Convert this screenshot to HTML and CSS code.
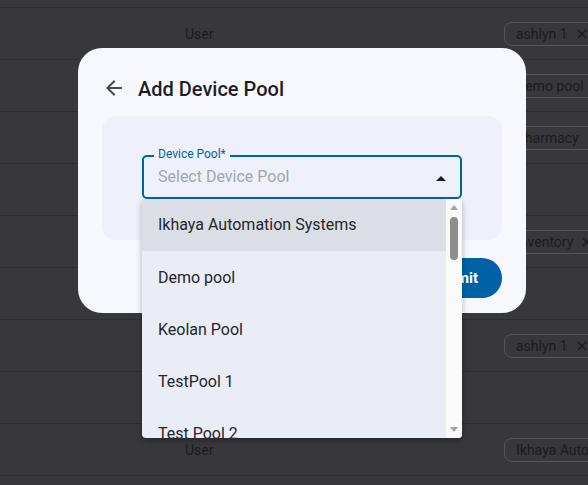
FILE: index.html
```html
<!doctype html>
<html lang="en">
  <head>
    <meta charset="utf-8">
    <title>Add Device Pool</title>
    <link rel="stylesheet" href="styles.css">
  </head>
  <body>
    <div class="table">
      <div class="row"></div>
      <div class="row"><span class="cell">User</span><span class="chip">ashlyn 1 <svg class="x" viewBox="0 0 10 10"><path d="M1 1l8 8M9 1l-8 8"/></svg></span></div>
      <div class="row"><span class="chip">Demo pool <svg class="x" viewBox="0 0 10 10"><path d="M1 1l8 8M9 1l-8 8"/></svg></span></div>
      <div class="row"><span class="chip">Pharmacy <svg class="x" viewBox="0 0 10 10"><path d="M1 1l8 8M9 1l-8 8"/></svg></span></div>
      <div class="row"></div>
      <div class="row"><span class="chip">Inventory <svg class="x" viewBox="0 0 10 10"><path d="M1 1l8 8M9 1l-8 8"/></svg></span></div>
      <div class="row"></div>
      <div class="row"><span class="chip">ashlyn 1 <svg class="x" viewBox="0 0 10 10"><path d="M1 1l8 8M9 1l-8 8"/></svg></span></div>
      <div class="row"></div>
      <div class="row"><span class="cell">User</span><span class="chip">Ikhaya Automation Systems</span></div>
    </div>

    <div class="modal">
      <div class="modal-head">
        <span class="back">
          <svg width="24" height="24" viewBox="0 0 24 24">
            <path d="M20 11H7.83l5.59-5.59L12 4l-8 8 8 8 1.41-1.41L7.83 13H20v-2z" fill="#454850"/>
          </svg>
        </span>
        <h1>Add Device Pool</h1>
      </div>

      <div class="panel">
        <div class="field">
          <div class="select">
            <span class="label">Device Pool*</span>
            <span class="placeholder">Select Device Pool</span>
            <span class="caret"></span>
          </div>
          <div class="dropdown">
            <ul class="options">
              <li class="active">Ikhaya Automation Systems</li>
              <li>Demo pool</li>
              <li>Keolan Pool</li>
              <li>TestPool 1</li>
              <li>Test Pool 2</li>
            </ul>
            <div class="scrollbar">
              <span class="arrow up"></span>
              <span class="thumb"></span>
              <span class="arrow down"></span>
            </div>
          </div>
        </div>
      </div>

      <div class="actions">
        <button class="submit">Submit</button>
      </div>
    </div>
  </body>
</html>
```

FILE: styles.css
```css
html, body {
  margin: 0;
  height: 485px;
  overflow: hidden;
}
body {
  background: #38373c;
  font-family: Roboto, "Liberation Sans", sans-serif;
  position: relative;
}

/* page behind the overlay */
.table {
  margin-top: -44px;
}
.row {
  height: 52px;
  box-sizing: border-box;
  border-bottom: 1px solid #2d2c31;
  display: grid;
  grid-template-columns: 185px 319px 84px;
  align-items: center;
  font-size: 14px;
  color: #1c1c1f;
  white-space: nowrap;
  overflow: hidden;
}
.cell {
  grid-column: 2;
}
.chip {
  grid-column: 3;
  display: inline-flex;
  align-items: center;
  height: 24px;
  box-sizing: border-box;
  border: 1px solid #56555b;
  border-radius: 8px;
  padding: 0 11px;
  width: max-content;
}
.x {
  width: 10px;
  height: 10px;
  margin-left: 9px;
  stroke: #1c1c1f;
  stroke-width: 1.4;
  fill: none;
}

/* dialog */
.modal {
  position: absolute;
  left: 78px;
  top: 48px;
  width: 448px;
  height: 265px;
  box-sizing: border-box;
  padding: 28px 24px 15px;
  background: #f7f8fe;
  border-radius: 24px;
}
.modal-head {
  display: flex;
  align-items: center;
  height: 24px;
  gap: 12px;
  margin-bottom: 16px;
}
.back {
  display: flex;
  width: 24px;
  height: 24px;
}
.modal-head h1 {
  margin: 0;
  font-size: 20px;
  font-weight: 500;
  color: #1c1e23;
  margin-top: 1px;
}
.panel {
  background: #eef1fa;
  border-radius: 14px;
  height: 124px;
  box-sizing: border-box;
  padding: 39px 40px 0;
}
.field {
  position: relative;
}
.select {
  position: relative;
  height: 44px;
  box-sizing: border-box;
  border: 2px solid #0063a8;
  border-radius: 5px;
  display: flex;
  align-items: center;
  padding: 0 14px;
}
.label {
  position: absolute;
  top: -10px;
  left: 10px;
  padding: 0 4px;
  background: #eef1fa;
  font-size: 12px;
  line-height: 14px;
  color: #0063a8;
}
.placeholder {
  flex: 1;
  font-size: 16px;
  color: #a3a5ad;
  margin-top: -1px;
}
.caret {
  width: 0;
  height: 0;
  border-left: 5px solid transparent;
  border-right: 5px solid transparent;
  border-bottom: 5px solid #1c1c20;
  margin-top: 3px;
}
.dropdown {
  position: absolute;
  top: 100%;
  left: 0;
  right: 0;
  height: 239px;
  display: flex;
  background: #eaedf6;
  border-radius: 0 0 4px 4px;
  box-shadow: 0 3px 6px rgba(0, 0, 0, 0.28);
  overflow: hidden;
  z-index: 2;
}
.options {
  flex: 1;
  list-style: none;
  margin: 0;
  padding: 0;
}
.options li {
  height: 52px;
  display: flex;
  align-items: center;
  padding-left: 16px;
  font-size: 16px;
  color: #25272c;
  margin-top: -1px;
  margin-bottom: 1px;
}
.options li.active {
  background: #dcdee6;
  margin-top: 0;
  padding-bottom: 1px;
  height: 51px;
}
.scrollbar {
  width: 16px;
  background: #fafafa;
  display: flex;
  flex-direction: column;
  align-items: center;
  padding: 6px 0;
  box-sizing: border-box;
}
.arrow {
  width: 0;
  height: 0;
  border-left: 4px solid transparent;
  border-right: 4px solid transparent;
}
.arrow.up {
  border-bottom: 5px solid #a3a3a3;
}
.arrow.down {
  border-top: 5px solid #a3a3a3;
  margin-top: auto;
}
.thumb {
  width: 8px;
  height: 43px;
  margin-top: 7px;
  border-radius: 4px;
  background: #8e8e8e;
}
.actions {
  display: flex;
  justify-content: flex-end;
  margin-top: 18px;
}
.submit {
  height: 40px;
  padding: 0 24px;
  border: none;
  border-radius: 20px;
  background: #0062a6;
  color: #fff;
  font-family: inherit;
  font-size: 15px;
  font-weight: 700;
}
```
